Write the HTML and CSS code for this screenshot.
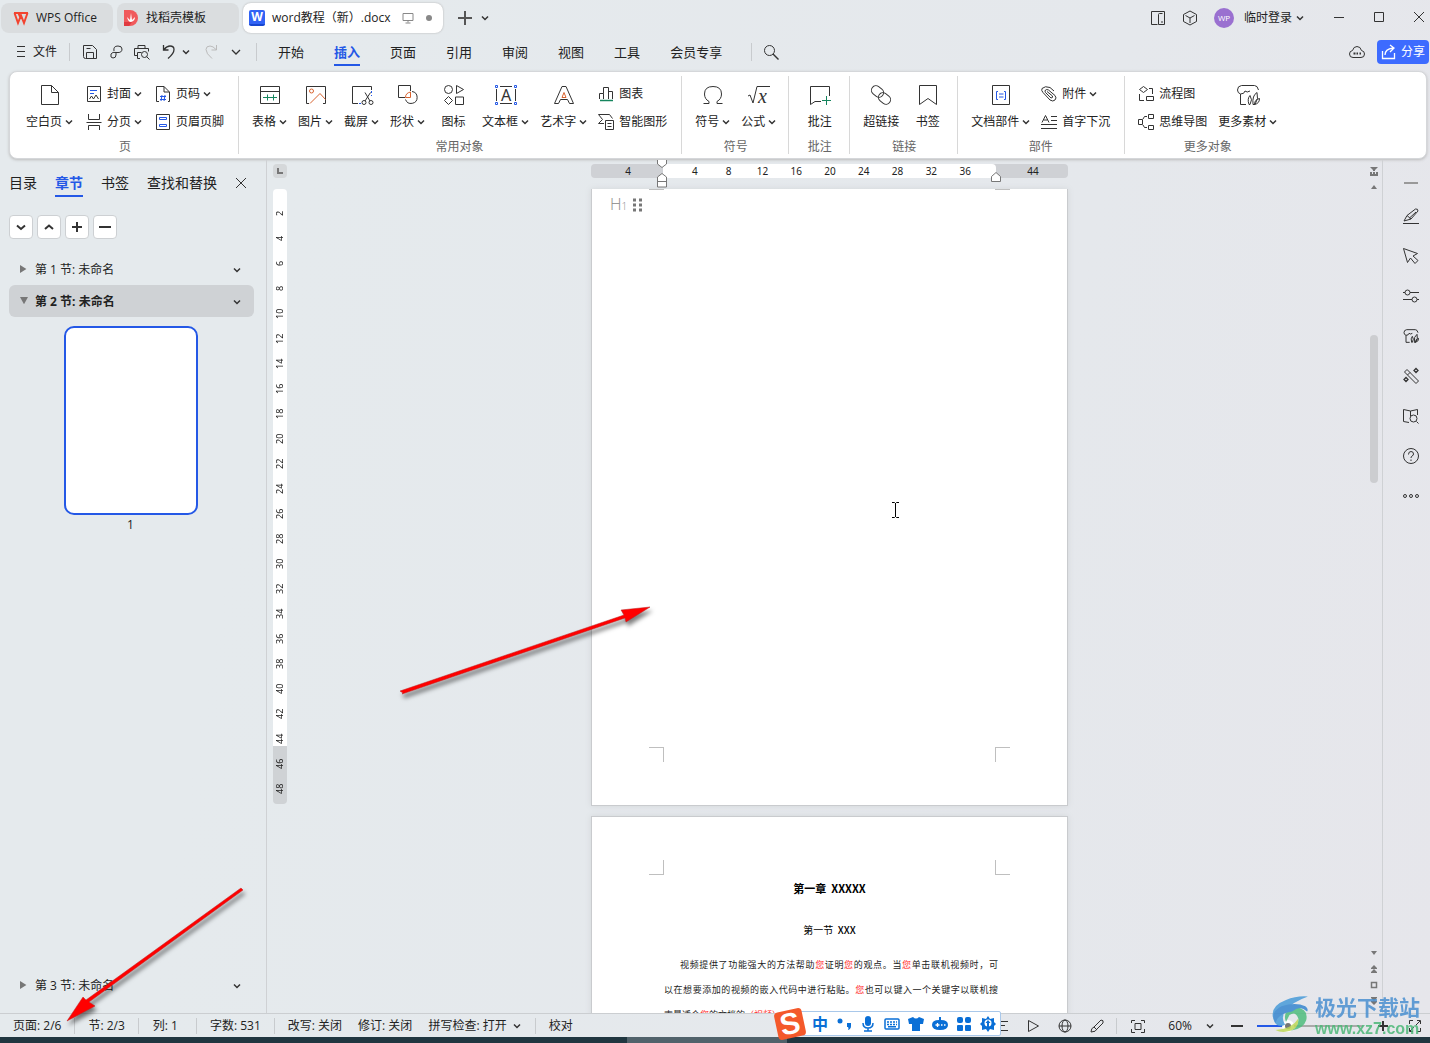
FILE: index.html
```html
<!DOCTYPE html>
<html lang="zh-CN">
<head>
<meta charset="utf-8">
<title>word教程（新）.docx - WPS Office</title>
<link rel="stylesheet" href="styles.css">
</head>
<body>
<svg class="defs" aria-hidden="true">
  <symbol id="chev" viewBox="0 0 8 8"><path d="M1 2.500L4 5.500L7 2.500" fill="none" stroke="currentColor" stroke-width="1.500"/></symbol>
  <symbol id="leaf" viewBox="0 0 24 24"><path d="M4.500 11v10.500h5.500M4.500 11q-3-1-3-4q0-4 4-4.500h13q3 0 4 4.500M4.500 11q4 0 4.500-3q2 2 5 0"/><path d="M13 21.500q-2-6 1-9q3 4 0 9zM17 21.500q-1-9 4-12q2 6-2 12zM18.500 21.500q0-5 5-6q0 5-5 6z"/></symbol>
</svg>

<header class="tabbar">
  <button class="tab"><svg class="i16" viewBox="0 0 16 16"><path d="M1 3h14M1.500 3L5 13L8 5.500L11 13L14.500 3M5.500 3L8 9" stroke="#f2432f" stroke-width="2"/></svg>WPS Office</button>
  <button class="tab tab-store"><svg class="i16" viewBox="0 0 16 16"><path d="M1 0h6a8 8 0 0 1 0 16H1z" fill="#f05a5c" stroke="none"/><path d="M1 12h8l-3 4H1z" fill="#e03a40" stroke="none"/><path d="M4 7q1 5 4 5q4-1 4-5l-3 3l-1-7l-1 7z" fill="#fff" stroke="none"/></svg>找稻壳模板</button>
  <button class="tab tab-doc"><span class="wicon">W</span>word教程（新）.docx<svg class="i12 grey" viewBox="0 0 12 12"><path d="M1 1.500h10v7H1zM6 8.500v2M3.500 11h5"/></svg><span class="dot"></span></button>
  <button class="plain plus" aria-label="新建"><svg class="i16" viewBox="0 0 16 16"><path d="M1 8h14M8 1v14" stroke-width="2" stroke="#555"/></svg></button>
  <button class="plain" aria-label="标签列表"><svg class="chev"><use href="#chev"/></svg></button>
  <div class="window-tools">
    <button class="plain" aria-label="边栏"><svg class="i16" viewBox="0 0 16 16"><path d="M7.500 14.500h-6v-13h13v13h-6V4.500q0-1 1-1h3M11 12h2"/></svg></button>
    <button class="plain" aria-label="应用"><svg class="i16" viewBox="0 0 16 16"><path d="M8 1l6.500 3.500v7L8 15l-6.500-3.500v-7zM3.500 5.500L8 8l4.500-2.500M8 8v5"/></svg></button>
    <button class="plain login"><span class="avatar">WP</span>临时登录<svg class="chev"><use href="#chev"/></svg></button>
  </div>
  <div class="window-buttons">
    <button class="plain" aria-label="最小化"><svg class="i12" viewBox="0 0 12 12"><path d="M1 5.500h10"/></svg></button>
    <button class="plain" aria-label="最大化"><svg class="i12" viewBox="0 0 12 12"><path d="M1.500.500h9v9h-9z"/></svg></button>
    <button class="plain" aria-label="关闭"><svg class="i12" viewBox="0 0 12 12"><path d="M1 0l10 10M11 0L1 10"/></svg></button>
  </div>
</header>

<nav class="menubar">
  <button class="plain file"><svg class="i12" viewBox="0 0 12 12"><path d="M2 .500h8M2 5.500h8M2 10.500h8"/></svg>文件</button>
  <span class="rule"></span>
  <div class="quick">
    <button class="plain" aria-label="保存"><svg class="i16" viewBox="0 0 16 16"><path d="M1.500 1.500h9l4 4v9h-11q-2 0-2-2zM4.500 14V8.500h7V14M4.500 4.500h4"/></svg></button>
    <button class="plain" aria-label="输出"><svg class="i16" viewBox="0 0 16 16"><path d="M6 7q-1-5 4-5q4 0 4 3q0 4-5 3.500q-5-1-6 1.500q-1 4 2 4q3 0 3-3v-2.500"/></svg></button>
    <button class="plain" aria-label="打印预览"><svg class="i16" viewBox="0 0 16 16"><path d="M4 4.500v-3h7v3M3.500 11.500h-3v-7h14v3M6 14.500H3.500v-6h4M15.500 15.500l-3-3"/><circle cx="10.500" cy="10.500" r="3"/></svg></button>
    <button class="plain undo" aria-label="撤销"><svg class="i16" viewBox="0 0 16 16"><path d="M3.500 1v5h5M4 5.500q3-3.500 6-3.500q4 0 4 3.500q0 4-6 9" stroke-width="1.300"/></svg><svg class="chev"><use href="#chev"/></svg></button>
    <button class="plain faint" aria-label="恢复"><svg class="i16" viewBox="0 0 16 16"><path d="M12.500 1v5h-5M12 5.500q-3-3.500-6-3.500q-4 0-4 3.500q0 4 6 9"/></svg></button>
    <button class="plain" aria-label="更多"><svg class="i12" viewBox="0 0 12 12"><path d="M2 4l4 4l4-4" stroke-width="1.300"/></svg></button>
  </div>
  <span class="rule"></span>
  <div class="menus">
    <button class="plain">开始</button><button class="plain active">插入</button><button class="plain">页面</button><button class="plain">引用</button><button class="plain">审阅</button><button class="plain">视图</button><button class="plain">工具</button><button class="plain">会员专享</button>
  </div>
  <span class="rule"></span>
  <button class="plain search" aria-label="搜索"><svg class="i16" viewBox="0 0 16 16"><circle cx="6.500" cy="6.500" r="5"/><path d="M10 10l5.500 5.500" stroke-width="1.400"/></svg></button>
  <button class="plain cloud" aria-label="云"><svg class="i16" viewBox="0 0 16 16"><path d="M4 13.500q-3.500 0-3.500-3.500q0-3 3-3.500q1-4 4.500-4t4.500 4q3 .5 3 3.500q0 3.500-3.500 3.500z"/><path d="M4.500 9.500h2M7.500 9.500h1.500M10.500 9.500h1.500" stroke-width="2"/></svg></button>
  <button class="share"><svg class="i16" viewBox="0 0 16 16"><path d="M1.500 7v7.500h12V9M4 11q0-6 8-7M9 1l4 3l-4 4" stroke-width="1.300"/></svg>分享</button>
</nav>

<section class="ribbon">
  <div class="group wide">
    <div class="tools">
      <button class="big"><svg class="i24" viewBox="0 0 24 24"><path d="M3.500 2.500h10l7 7v12h-17zM13.500 2.500v7h7"/></svg><span>空白页<svg class="chev"><use href="#chev"/></svg></span></button>
      <div class="stack">
        <button class="small"><svg class="i16" viewBox="0 0 16 16"><path d="M1.500.5h13v15h-13z"/><path d="M4 4.500h7M4 7.500h4" stroke="#2458e6"/><path d="M3.500 13l2-3l2 3l2.500-4l2.500 4"/></svg>封面<svg class="chev"><use href="#chev"/></svg></button>
        <button class="small"><svg class="i16" viewBox="0 0 16 16"><path d="M2.500 0v5.500h11V0M.5 8.500h15M2.500 16v-4.500h11V16"/></svg>分页<svg class="chev"><use href="#chev"/></svg></button>
      </div>
      <div class="stack">
        <button class="small"><svg class="i16" viewBox="0 0 16 16"><path d="M4 15.500H1.500V.5H9l5.500 5.500v9.500H13M9 .5V6h5"/><path d="M5 10.500h6M5 13.500h6M7 9l-1 6M10 9l-1 6" stroke="#2458e6"/></svg>页码<svg class="chev"><use href="#chev"/></svg></button>
        <button class="small"><svg class="i16" viewBox="0 0 16 16"><path d="M1.500.5h13v15h-13z"/><path d="M4.500 3.500h7v2h-7zM4.500 10.500h7v2h-7z" stroke="#2458e6"/></svg>页眉页脚</button>
      </div>
    </div>
    <p class="caption">页</p>
  </div>
  <div class="group roomy">
    <div class="tools">
      <button class="big"><svg class="i24" viewBox="0 0 24 24"><path d="M2.500 3.500h19v17h-19zM2.500 8.500h19"/><path d="M5 14.500h14M9.500 11.500v6M15.500 11.500v6" stroke="#16855e"/></svg><span>表格<svg class="chev"><use href="#chev"/></svg></span></button>
      <button class="big"><svg class="i24" viewBox="0 0 24 24"><path d="M5 20.500H2.500v-17h19v17H19"/><circle cx="7.500" cy="8" r="2" stroke="#d8632f"/><path d="M6 20.500L16 10.500l5.500 6" stroke="#d8632f"/></svg><span>图片<svg class="chev"><use href="#chev"/></svg></span></button>
      <button class="big"><svg class="i24" viewBox="0 0 24 24"><path d="M8 20.500H2.500v-17h19V7M15 9.500l5 8.500M20.500 9.500L15 18"/><circle cx="14" cy="19.500" r="2"/><circle cx="21" cy="19.500" r="2"/><path d="M21.500 8v5M9 20.500h3" stroke="#2458e6" stroke-dasharray="2 2"/></svg><span>截屏<svg class="chev"><use href="#chev"/></svg></span></button>
      <button class="big"><svg class="i24" viewBox="0 0 24 24"><path d="M9 14.500H2.500v-12h12V8M16 8.500a6 6 0 1 1-6.500 8"/><path d="M9.500 14.500h5V9q-5 1-5 5.500z" stroke="#d8632f"/></svg><span>形状<svg class="chev"><use href="#chev"/></svg></span></button>
      <button class="big"><svg class="i24" viewBox="0 0 24 24"><circle cx="6.500" cy="6.500" r="4"/><path d="M14.500 2.500v8l7-4zM6.500 13.500l4 4l-4 4l-4-4zM13.500 14h8v7.500h-8z"/></svg><span>图标</span></button>
      <button class="big"><svg class="i24" viewBox="0 0 24 24"><path d="M6 3.500h12M6 20.500h12M2.500 6v12M21.500 6v12"/><path d="M1.500 2.500h2v2h-2zM20.500 2.500h2v2h-2zM1.500 19.500h2v2h-2zM20.500 19.500h2v2h-2z" stroke="#2458e6"/><text x="7" y="18" class="glyph-a">A</text></svg><span>文本框<svg class="chev"><use href="#chev"/></svg></span></button>
      <button class="big"><svg class="i24" viewBox="0 0 24 24"><path d="M2.500 20.500L10 3.500h4l7.500 17h-4l-2-4h-7l-2 4z"/><path d="M10 14.500l2-5l2 5z" stroke="#d8632f"/></svg><span>艺术字<svg class="chev"><use href="#chev"/></svg></span></button>
      <div class="stack">
        <button class="small"><svg class="i16" viewBox="0 0 16 16"><path d="M1.500 13V7.500h4V13M5.500 7.500v-6h5V13M10.500 5.500h4V13"/><path d="M2 14.500h13" stroke="#16855e" stroke-width="1.500"/></svg>图表</button>
        <button class="small"><svg class="i16" viewBox="0 0 16 16"><path d="M6 9.500H.5l4-4l-4-5h11l3 4M7.500 6.500h8v9h-8zM9.500 9.500h4M9.500 12.500h4"/></svg>智能图形</button>
      </div>
    </div>
    <p class="caption">常用对象</p>
  </div>
  <div class="group">
    <div class="tools">
      <button class="big"><svg class="i24" viewBox="0 0 24 24"><path d="M2.500 20.500H8v-2Q3.500 16 3.500 11q0-7.500 8.500-7.500t8.500 7.500q0 5-4.500 7.500v2h5.500"/></svg><span>符号<svg class="chev"><use href="#chev"/></svg></span></button>
      <button class="big"><svg class="i24" viewBox="0 0 24 24"><path d="M1 13l2-1l3 8l4-16.500h13"/><text x="11" y="20" class="glyph-x">x</text></svg><span>公式<svg class="chev"><use href="#chev"/></svg></span></button>
    </div>
    <p class="caption">符号</p>
  </div>
  <div class="group">
    <div class="tools">
      <button class="big"><svg class="i24" viewBox="0 0 24 24"><path d="M13 18.500H7l-4.500 3v-18h19V13"/><path d="M14 17.500h9M18.500 13v9" stroke="#16855e"/></svg><span>批注</span></button>
    </div>
    <p class="caption">批注</p>
  </div>
  <div class="group">
    <div class="tools">
      <button class="big"><svg class="i24" viewBox="0 0 24 24"><rect x="2" y="4" width="13" height="9" rx="4.500" transform="rotate(38 8.500 8.500)"/><rect x="9" y="11" width="13" height="9" rx="4.500" transform="rotate(38 15.500 15.500)"/></svg><span>超链接</span></button>
      <button class="big"><svg class="i24" viewBox="0 0 24 24"><path d="M3.500 2.500h17v19L12 15.500l-8.500 6z"/></svg><span>书签</span></button>
    </div>
    <p class="caption">链接</p>
  </div>
  <div class="group roomy">
    <div class="tools">
      <button class="big"><svg class="i24" viewBox="0 0 24 24"><path d="M3.500 2.500h17v19h-17z"/><path d="M9 8.500H7.500v8H9M15 8.500h1.500v8H15M10 11h4.500M10 14h4.500" stroke="#2458e6"/></svg><span>文档部件<svg class="chev"><use href="#chev"/></svg></span></button>
      <div class="stack">
        <button class="small"><svg class="i16" viewBox="0 0 16 16"><path d="M13 5L9 1.500q-5-2-8 1q-1 2 1 4l7 7.500q3 2 5 0t0-4.500L7.500 4q-2-1-3 0t0 2.500L10 12q2 0 1.500-2L6 5.500"/></svg>附件<svg class="chev"><use href="#chev"/></svg></button>
        <button class="small"><svg class="i16" viewBox="0 0 16 16"><path d="M10 2.500h6M10 6.500h6M0 10.500h16M0 14.500h16M1 8.500l3.500-7L8 8.500M2.500 6h4"/></svg>首字下沉</button>
      </div>
    </div>
    <p class="caption">部件</p>
  </div>
  <div class="group last">
    <div class="tools">
      <div class="stack">
        <button class="small"><svg class="i16" viewBox="0 0 16 16"><path d="M5.500.5l4 3l-4 3l-4-3zM1.500 8v6.500H6M8.500 10.500h7v4h-7zM11 2.500h3.500V8" /></svg>流程图</button>
        <button class="small"><svg class="i16" viewBox="0 0 16 16"><path d="M.5 5.500h4v5h-4zM10.500.5h5v4h-5zM10.500 11.500h5v4h-5zM9 2.500H6.500L5 5M5 11l1.500 2.500H9"/></svg>思维导图</button>
      </div>
      <button class="big"><svg class="i24"><use href="#leaf"/></svg><span>更多素材<svg class="chev"><use href="#chev"/></svg></span></button>
    </div>
    <p class="caption">更多对象</p>
  </div>
</section>

<main class="workspace">
  <aside class="panel">
    <div class="panel-tabs">
      <button class="plain">目录</button><button class="plain active">章节</button><button class="plain">书签</button><button class="plain">查找和替换</button>
      <button class="plain" aria-label="关闭窗格"><svg class="i12" viewBox="0 0 12 12"><path d="M1 1l10 10M11 1L1 11"/></svg></button>
    </div>
    <div class="panel-tools">
      <button aria-label="下一节"><svg class="i12" viewBox="0 0 12 12"><path d="M2 4.500l4 3.500l4-3.500"/></svg></button>
      <button aria-label="上一节"><svg class="i12" viewBox="0 0 12 12"><path d="M2 8l4-3.500L10 8"/></svg></button>
      <button aria-label="新增节"><svg class="i12" viewBox="0 0 12 12"><path d="M1 6h10M6 1v10"/></svg></button>
      <button aria-label="删除节"><svg class="i12" viewBox="0 0 12 12"><path d="M0 6h12"/></svg></button>
    </div>
    <button class="section"><span class="tri right"></span>第 1 节: 未命名<svg class="chev"><use href="#chev"/></svg></button>
    <button class="section current"><span class="tri down"></span>第 2 节: 未命名<svg class="chev"><use href="#chev"/></svg></button>
    <figure class="thumb"><div class="thumb-page"></div><figcaption>1</figcaption></figure>
    <button class="section bottom"><span class="tri right"></span>第 3 节: 未命名<svg class="chev"><use href="#chev"/></svg></button>
  </aside>

  <div class="vruler-col">
    <button class="corner" aria-label="制表符"><svg class="i8" viewBox="0 0 8 8"><path d="M2 1v5h5" stroke-width="2" stroke="#777"/></svg></button>
    <div class="vruler"><span>2</span><span>4</span><span>6</span><span>8</span><span>10</span><span>12</span><span>14</span><span>16</span><span>18</span><span>20</span><span>22</span><span>24</span><span>26</span><span>28</span><span>30</span><span>32</span><span>34</span><span>36</span><span>38</span><span>40</span><span>42</span><span>44</span><span>46</span><span>48</span></div>
  </div>

  <div class="canvas">
    <div class="hruler">
      <div class="margin"><span>4</span></div>
      <div class="measure"><span>4</span><span>8</span><span>12</span><span>16</span><span>20</span><span>24</span><span>28</span><span>32</span><span>36</span></div>
      <div class="margin"><span>44</span></div>
      <svg class="indent indent-left" viewBox="0 0 12 30"><path d="M1.500 1.500h9V6L6 9.500L1.500 6zM6 15.500l4.500 3.500v10h-9V19zM1.500 23.500h9"/></svg>
      <svg class="indent indent-right" viewBox="0 0 12 30"><path d="M6 14.500l4.500 4v5h-9v-5z"/></svg>
    </div>
    <article class="page first">
      <div class="marks head"><span></span><span></span></div>
      <div class="handle"><span class="h1mark">H<small>1</small></span><svg viewBox="0 0 8 14"><path d="M0 2h3M6 2h3M0 7h3M6 7h3M0 12h3M6 12h3"/></svg></div>
      <div class="marks below"><span></span><span></span></div>
    </article>
    <article class="page second">
      <div class="marks above"><span></span><span></span></div>
      <h1>第一章&nbsp; XXXXX</h1>
      <h2>第一节&nbsp; <b>XXX</b></h2>
      <p>视频提供了功能强大的方法帮助<em>您</em>证明<em>您</em>的观点。当<em>您</em>单击联机视频时，可<br>以在想要添加的视频的嵌入代码中进行粘贴。<em>您</em>也可以键入一个关键字以联机搜<br></p>
      <p class="tail">索最适合<em>您</em>的文档的<em>（视频）</em></p>
    </article>
    <svg class="ibeam" viewBox="0 0 9 16"><path d="M1 .5h2.500l1 1l1-1H8M4.500 1v14M1 15.500h2.500l1-1l1 1H8"/></svg>
  </div>

  <div class="scrollbar">
    <svg viewBox="0 0 10 10"><path d="M1 1h8L6 4v1H4V4zM1 6h2v2h1V6h2v2h1V6h2v4H1z"/></svg>
    <svg viewBox="0 0 10 10"><path d="M5 3l3 4H2z"/></svg>
    <div class="track"><div class="grip"></div></div>
    <svg viewBox="0 0 10 10"><path d="M2 3h6L5 7z"/></svg>
    <svg viewBox="0 0 10 10"><path d="M5 1l3 3H2zM2 4h6v1H2zM5 5l3 3H2zM2 8h6v1H2z"/></svg>
    <svg viewBox="0 0 10 10"><path d="M2.500 2.500h5v5h-5z" fill="none" stroke="#777" stroke-width="1.500"/></svg>
    <svg viewBox="0 0 10 10"><path d="M5 9l3-3H2zM2 5h6v1H2zM5 5l3-3H2zM2 1h6v1H2z"/></svg>
  </div>

  <aside class="rail">
    <button class="plain first-tool" aria-label="收起"><svg class="i16" viewBox="0 0 16 16"><path d="M1 8h14" stroke="#999" stroke-width="2"/></svg></button>
    <button class="plain" aria-label="样式"><svg class="i16" viewBox="0 0 16 16"><path d="M0 15.500h16M1 13l3-5.500l8.500-6.500q2.500-.5 2.500 2L8 11zM4 7.500L8 11M6.500 10L13 4"/></svg></button>
    <button class="plain" aria-label="选择"><svg class="i16" viewBox="0 0 16 16"><path d="M.500.500l4 14l3-4.500l4.500 5.500l3-3L10 8l4.500-2.500z"/></svg></button>
    <button class="plain" aria-label="设置"><svg class="i16" viewBox="0 0 16 16"><path d="M0 4.500h2M7 4.500h9M0 11.500h9M14 11.500h2"/><circle cx="4.500" cy="4.500" r="2.500"/><circle cx="11.500" cy="11.500" r="2.500"/></svg></button>
    <button class="plain" aria-label="素材"><svg class="i16 leaf"><use href="#leaf"/></svg></button>
    <button class="plain" aria-label="工具"><svg class="i16" viewBox="0 0 16 16"><path d="M4 1.500l11.500 11.500l-2.500 2.500L1.500 4zM4.500 7l2.500-2.500"/><path d="M13 .500l2 2l-2 2l-2-2zM3 9.500l2 2l-2 2l-2-2z" stroke-width="1.300"/></svg></button>
    <button class="plain" aria-label="查阅"><svg class="i16" viewBox="0 0 16 16"><path d="M6 14.500l-5.500-1v-12l7 1.500l7-1.500V7M7.500 3v5M15.500 15.500l-2-2"/><circle cx="10.500" cy="10.500" r="3.500"/></svg></button>
    <button class="plain" aria-label="帮助"><svg class="i16" viewBox="0 0 16 16"><circle cx="8" cy="8" r="7.500"/><path d="M5.500 6.500q0-3 2.500-3t2.500 2.500q0 1.500-1.500 2q-1 .5-1 2M8 11.500v1.500"/></svg></button>
    <button class="plain" aria-label="更多"><svg class="i16" viewBox="0 0 16 16"><circle cx="2" cy="8" r="1.500"/><circle cx="8" cy="8" r="1.500"/><circle cx="14" cy="8" r="1.500"/></svg></button>
  </aside>
</main>

<footer class="status">
  <span class="cell">页面: 2/6</span><span class="cell">节: 2/3</span><span class="cell col">列: 1</span><span class="cell">字数: 531</span>
  <span class="cell modes"><button class="plain">改写: 关闭</button><button class="plain">修订: 关闭</button><button class="plain">拼写检查: 打开<svg class="chev"><use href="#chev"/></svg></button></span>
  <button class="plain cell end">校对</button>
  <div class="views">
    <button class="plain" aria-label="大纲"><svg class="i16" viewBox="0 0 16 16"><path d="M1 3.500h14M4 7.500h8M1 12.500h14"/></svg></button>
    <button class="plain" aria-label="播放"><svg class="i16" viewBox="0 0 16 16"><path d="M3.500 2.500v11L13.500 8z"/></svg></button>
    <button class="plain" aria-label="网页视图"><svg class="i16" viewBox="0 0 16 16"><circle cx="8" cy="8" r="6"/><ellipse cx="8" cy="8" rx="3" ry="6"/><path d="M2 8h12"/></svg></button>
    <button class="plain" aria-label="护眼"><svg class="i16" viewBox="0 0 16 16"><path d="M2 14q0-4 3-5l7-7q3 0 2 3l-6 6q-1 3-6 3zM5 9l3 3"/></svg></button>
  </div>
  <div class="zoom">
    <button class="plain" aria-label="适合页面"><svg class="i16" viewBox="0 0 16 16"><path d="M1.500 5V2.500H5M11 2.500h3.500V5M14.500 11v3.500H11M5 14.500H1.500V11M5 5.500h6v6H5z"/></svg></button>
    <button class="plain level">60%<svg class="chev"><use href="#chev"/></svg></button>
    <button class="plain" aria-label="缩小"><svg class="i12" viewBox="0 0 12 12"><path d="M0 6h12" stroke-width="2"/></svg></button>
    <input type="range" aria-label="缩放" min="0" max="100" value="27">
    <button class="plain" aria-label="放大"><svg class="i12" viewBox="0 0 12 12"><path d="M1 6h10M6 1v10" stroke-width="2"/></svg></button>
    <button class="plain full" aria-label="全屏"><svg class="i12" viewBox="0 0 12 12"><path d="M.5 4V.5H4M8 .5h3.500V4M11.500 8v3.500H8M4 11.500H.5V8M7 5l4-4M5 7l-4 4"/></svg></button>
  </div>
</footer>
<div class="taskbar"><span></span></div>

<div class="ime">
  <span class="sogou">S</span>
  <b>中</b>
  <svg viewBox="0 0 16 16"><circle cx="4" cy="5" r="2.500"/><path d="M11 7h4v3q0 3-3 4q1-2 0-3h-1z"/></svg>
  <svg viewBox="0 0 16 16"><rect x="5" y="0" width="6" height="10" rx="3"/><path d="M3 7q0 5 5 5t5-5M8 12v3M4 15h8" fill="none" stroke="#0a6fd6" stroke-width="1.500"/></svg>
  <svg viewBox="0 0 16 16"><rect x="1" y="3" width="14" height="10" rx="1" fill="none" stroke="#0a6fd6" stroke-width="1.500"/><path d="M3 6h10M3 8.500h10" fill="none" stroke="#0a6fd6" stroke-width="1.500" stroke-dasharray="2 1"/><path d="M4 10h8v1.500H4z"/></svg>
  <svg viewBox="0 0 16 16"><path d="M5 1q3 3 6 0l5 2l-1 5h-3v7H4V8H1L0 3z"/></svg>
  <svg viewBox="0 0 16 16"><path d="M7 1h2v3q7 0 7 5t-8 5t-8-5t7-5z"/><path d="M3.500 9h4M5.500 7v4M9 9h1.500M12 9h1.500" stroke="#fff" stroke-width="1.300"/></svg>
  <svg viewBox="0 0 16 16"><rect x="1" y="1" width="6" height="6" rx="2"/><rect x="9" y="1" width="6" height="6" rx="2"/><rect x="1" y="9" width="6" height="6" rx="1"/><rect x="9" y="9" width="6" height="6" rx="1"/></svg>
  <svg viewBox="0 0 16 16"><path d="M8 0l2 3l4-1v4l2 2l-2 2v4l-4-1l-2 3l-2-3l-4 1v-4L0 8l2-2V2l4 1z"/><circle cx="8" cy="7" r="3.500" fill="#fff"/><path d="M8 4l2.500 3H9v7H7V7H5.500z"/></svg>
</div>

<svg class="arrow arrow-page" viewBox="0 0 260 100"><path d="M6 88L3 86L227 10L224 5L253 2L229 17L228 13L5 89z"/></svg>
<svg class="arrow arrow-status" viewBox="0 0 190 145"><path d="M177 2L179 4L25 116L31 120L3 135L19 111L22 114z"/></svg>

<div class="watermark">
  <svg viewBox="0 0 50 46"><path d="M4 31Q-4 14 17 6Q29 1 42 2Q25 8 16 18Q11 27 16 34Q8 38 4 31z" fill="#489bd9"/><path d="M17 31Q12 18 28 14Q43 16 40 29Q37 39 22 41Q32 36 31 27Q28 18 21 23z" fill="#4fbd7e"/><path d="M24 19Q8 21 5 32Q-2 20 12 13Q28 8 39 13Q43 16 41 19Q33 11 24 19z" fill="#3686cf"/><path d="M5 40Q24 39 31 27Q32 38 22 41Q12 44 5 40z" fill="#bfd957"/></svg>
  <div><strong>极光下载站</strong><span>www.xz7.com</span></div>
</div>
</body>
</html>
```
FILE: styles.css
```css
* { box-sizing: border-box; }
body {
  margin: 0;
  height: 100vh;
  overflow: hidden;
  position: relative;
  display: flex;
  flex-direction: column;
  background: linear-gradient(100deg, #e5eaed 20%, #e5e8ec 70%, #e6e6eb);
  color: #222;
  font: 12px/16px "Open Sans", "Noto Sans CJK SC", sans-serif;
}
p, h1, h2, figure { margin: 0; }
button { font: inherit; color: inherit; border: 0; background: none; padding: 0; display: flex; align-items: center; white-space: nowrap; }
svg { fill: none; stroke: #333; stroke-width: 1; flex: none; overflow: visible; }
.defs { position: absolute; width: 0; height: 0; }
.i8 { width: 8px; height: 8px; }
.i12 { width: 12px; height: 12px; }
.i16 { width: 16px; height: 16px; }
.i24 { width: 24px; height: 24px; }
.chev { width: 8px; height: 8px; color: #333; }
.rule { width: 1px; height: 18px; background: #c8cbce; }

/* title bar */
.tabbar { height: 36px; flex: none; display: flex; align-items: center; padding: 0 5px 0 1px; }
.tab { height: 30px; gap: 7px; width: 112px; margin-right: 4px; padding: 0 12px; border-radius: 8px; background: #dadddf; }
.tab-store { width: 122px; padding: 0 6px; }
.tab-doc { width: 200px; padding: 0 11px 0 6px; background: #fff; box-shadow: 0 0 2px #aaa; }
.wicon { width: 16px; height: 16px; border-radius: 2px; background: #3163f5; color: #fff; font-weight: 700; text-align: center; border-bottom: 2px solid #1746d0; line-height: 14px; }
.grey { stroke: #888; margin-left: 4px; }
.dot { width: 6px; height: 6px; border-radius: 3px; background: #888; margin-left: auto; }
.plus { margin: 0 8px 0 10px; }
.window-tools { margin-left: auto; display: flex; gap: 16px; }
.login { gap: 4px; }
.avatar { width: 20px; height: 20px; border-radius: 10px; background: #9a70d0; color: #fff; font-size: 8px; line-height: 20px; text-align: center; margin-right: 6px; }
.window-buttons { display: flex; gap: 28px; margin-left: 29px; }

/* menu bar */
.menubar { height: 35px; flex: none; display: flex; align-items: center; padding: 0 1px 3px 15px; }
.file { gap: 6px; margin-right: 12px; }
.quick { display: flex; gap: 10px; margin: 0 14px 0 12px; }
.undo .chev { margin: 0 4px 0 6px; }
.faint svg { stroke: #bbb; }
.menus { display: flex; gap: 30px; margin: 0 29px 0 21px; font-size: 13px; }
.menus .plain { height: 28px; border-top: 2px solid transparent; border-bottom: 2px solid transparent; }
.menus .active { color: #2458e6; font-weight: 700; border-bottom-color: #2458e6; }
.search { margin-left: 11px; }
.cloud { margin-left: auto; }
.share { height: 24px; margin-left: 12px; padding: 0 4px; gap: 4px; border-radius: 4px; background: #3d6bff; color: #fff; }
.share svg { stroke: #fff; }

/* ribbon */
.ribbon { flex: none; display: flex; margin: 0 3px 1px 9px; padding: 4px 0; background: #fff; border: 1px solid #d5d7da; border-radius: 8px; box-shadow: 0 1px 3px #bbb; }
.group { display: flex; flex-direction: column; padding: 0 12px 0 13px; border-right: 1px solid #d8d8d8; }
.wide { padding: 0 14px 0 16px; }
.roomy { padding-right: 14px; }
.last { border: 0; }
.tools { display: flex; gap: 11px; height: 64px; }
.wide .tools { gap: 13px; }
.big { flex-direction: column; min-width: 35px; padding-top: 7px; gap: 7px; }
.big span { display: flex; align-items: center; gap: 3px; }
.stack { display: flex; flex-direction: column; gap: 12px; padding-top: 10px; }
.small { gap: 5px; }
.small .chev { margin-left: -2px; }
.caption { text-align: center; color: #666; line-height: 14px; }
.glyph-a { font: 16px "Noto Sans", sans-serif; fill: #333; stroke: none; }
.glyph-x { font: italic 20px "Liberation Serif", serif; fill: #333; stroke: none; }

/* workspace */
.workspace { flex: 1; min-height: 0; display: flex; }
.panel { width: 267px; flex: none; display: flex; flex-direction: column; padding: 11px 12px 12px 9px; border-right: 1px solid #cfd1d4; }
.panel-tabs { display: flex; gap: 18px; font-size: 14px; }
.panel-tabs .plain { height: 26px; border-bottom: 2px solid transparent; }
.panel-tabs .active { color: #2458e6; font-weight: 700; border-color: #2458e6; }
.panel-tools { display: flex; gap: 4px; margin: 18px 0 14px; }
.panel-tools button { width: 24px; height: 24px; justify-content: center; background: #fff; border: 1px solid #cdd0d3; border-radius: 4px; }
.panel-tools svg { stroke-width: 2; }
.section { height: 32px; flex: none; padding: 2px 13px 0 11px; border-radius: 6px; }
.section .chev { margin-left: auto; }
.current { background: #cfd2d5; font-weight: 700; }
.tri { width: 8px; height: 8px; margin: 0 7px 2px 0; background: #777; }
.right { clip-path: polygon(0 0, 80% 50%, 0 100%); }
.down { clip-path: polygon(0 0, 100% 0, 50% 90%); }
.thumb { align-self: center; margin: 9px 2px 0 0; text-align: center; }
.thumb-page { width: 134px; height: 189px; background: #fff; border: 2px solid #2458e6; border-radius: 10px; }
.thumb figcaption { margin-top: 2px; }
.bottom { margin-top: auto; }

.vruler-col { width: 25px; flex: none; padding: 4px 5px 0 6px; }
.corner { width: 14px; height: 14px; justify-content: center; border-radius: 4px; background: #d5d8da; }
.vruler { margin-top: 11px; height: 615px; padding-top: 12px; border-radius: 4px; background: linear-gradient(#fff 557px, #cfd2d5 557px); font: 9px/14px "Noto Sans", sans-serif; }
.vruler span { display: block; height: 25px; writing-mode: vertical-rl; transform: rotate(180deg); text-align: center; }

.canvas { flex: 1; min-width: 0; overflow: hidden; position: relative; display: flex; flex-direction: column; align-items: center; }
.hruler { position: relative; z-index: 1; width: 477px; height: 14px; flex: none; margin: 4px 0 11px; display: flex; border-radius: 4px; background: #cfd1d5; font: 10px/14px "Noto Sans", sans-serif; text-align: center; }
.margin { width: 72px; padding-left: 2px; }
.measure { flex: 1; display: flex; padding: 0 14px 0 15px; background: #fff; border-radius: 0 4px 4px 0; }
.measure span { flex: 1; }
.indent { position: absolute; top: -6px; width: 12px; height: 30px; fill: #fff; stroke: #777; }
.indent-left { left: 65px; }
.indent-right { right: 66px; }
.page { width: 477px; flex: none; background: #fff; border: 1px solid #c9cbce; box-shadow: 0 0 6px #d3d6d9; }
.first { height: 617px; border-top: 0; margin-bottom: 10px; display: flex; flex-direction: column; }
.second { height: 675px; }
.marks { display: flex; justify-content: space-between; padding: 0 57px; }
.marks span { width: 15px; height: 15px; border: 0 solid #bfbfbf; }
.head span { height: 1px; border-top-width: 1px; }
.below { margin: auto 0 43px; }
.below span { border-width: 1px 1px 0 0; }
.below span + span { border-width: 1px 0 0 1px; }
.above { margin-top: 43px; }
.above span { border-width: 0 1px 1px 0; }
.above span + span { border-width: 0 0 1px 1px; }
.handle { display: flex; align-items: center; gap: 6px; padding: 6px 18px; }
.handle svg { width: 8px; height: 14px; stroke: #777; stroke-width: 3; }
.h1mark { color: #888; font: 16px/16px "Open Sans", sans-serif; font-weight: 300; }
.h1mark small { font-size: 10px; }
.second h1 { margin-top: 5px; text-align: center; font: bold 11px/16px "Noto Sans CJK SC", sans-serif; color: #000; }
.second h2 { margin: 26px 0 14px; text-align: center; font: 10px/16px "Noto Sans CJK SC", sans-serif; color: #000; }
.second h2 b { font-weight: 500; }
.second p { margin: 0 69px 0 72px; font: 9px/25px "Noto Sans CJK SC", sans-serif; text-indent: 16px; text-align: justify; text-align-last: justify; white-space: nowrap; }
.second .tail { text-indent: 0; text-align-last: left; }
.second em { font-style: normal; color: #f22; }
.ibeam { position: absolute; left: 599px; top: 342px; width: 9px; height: 16px; stroke: #000; }

.scrollbar { width: 15px; flex: none; display: flex; flex-direction: column; align-items: center; gap: 6px; padding: 6px 2px 7px 0; }
.scrollbar svg { width: 10px; height: 10px; fill: #777; stroke: none; }
.track { flex: 1; padding-top: 137px; }
.grip { width: 8px; height: 148px; border-radius: 4px; background: #cccdd0; }

.rail { width: 48px; flex: none; display: flex; flex-direction: column; align-items: center; padding: 10px 0 0 9px; border-left: 1px solid #cfd1d4; }
.rail .plain { height: 40px; }
.rail .first-tool { height: 26px; }
.leaf { stroke-width: 1.5px; }

/* status bar */
.status { height: 24px; flex: none; display: flex; align-items: center; border-top: 1px solid #cbced1; }
.cell { padding: 0 13px; border-right: 1px solid #c8cbce; }
.col { padding: 0 18px 0 14px; }
.modes { display: flex; gap: 16px; padding-right: 14px; }
.modes .plain { gap: 6px; }
.end { border: 0; }
.views { margin-left: auto; display: flex; gap: 16px; padding-right: 11px; border-right: 1px solid #c8cbce; }
.zoom { display: flex; align-items: center; padding: 0 9px 0 13px; }
.level { gap: 14px; margin: 0 17px 0 22px; }
.zoom input { appearance: none; width: 106px; height: 12px; margin: 0 14px; background: linear-gradient(to right, #2458e6 30px, #aaa 30px) center / 100% 2px no-repeat; }
.zoom input::-webkit-slider-thumb { appearance: none; width: 12px; height: 12px; border: 3px solid #fff; border-radius: 6px; background: #777; }
.full { margin-left: 20px; }
.taskbar { height: 6px; flex: none; background: #203640; display: flex; justify-content: center; padding-right: 16px; }
.taskbar span { width: 160px; background: #51626b; }

/* floating layers */
.ime { position: absolute; left: 783px; bottom: 7px; height: 25px; display: flex; align-items: center; gap: 8px; padding: 0 4px 0 0; background: #fff; border: 1px solid #a9c8ea; border-radius: 2px; }
.ime svg { width: 16px; height: 16px; fill: #0a6fd6; stroke: none; }
.ime b { width: 16px; color: #0a6fd6; font-size: 16px; }
.sogou { width: 28px; height: 28px; margin-left: -8px; border-radius: 4px; background: #f4592b; color: #fff; font: bold 30px/28px "Liberation Sans", sans-serif; text-align: center; transform: rotate(-12deg); }
.arrow { position: absolute; fill: #f00; stroke: #b22; stroke-width: .5px; filter: drop-shadow(2px 4px 2px rgba(0, 0, 0, .5)); }
.arrow-page { left: 397px; top: 605px; width: 260px; height: 100px; }
.arrow-status { left: 64px; bottom: 12px; width: 190px; height: 145px; }
.watermark { position: absolute; right: 10px; bottom: 6px; display: flex; opacity: .85; }
.watermark svg { width: 44px; height: 44px; stroke: none; }
.watermark div { display: flex; flex-direction: column; }
.watermark strong { color: #4a90d0; font-size: 21px; line-height: 28px; }
.watermark span { color: #4db878; font: bold 16px/16px "Liberation Sans", sans-serif; }
```
